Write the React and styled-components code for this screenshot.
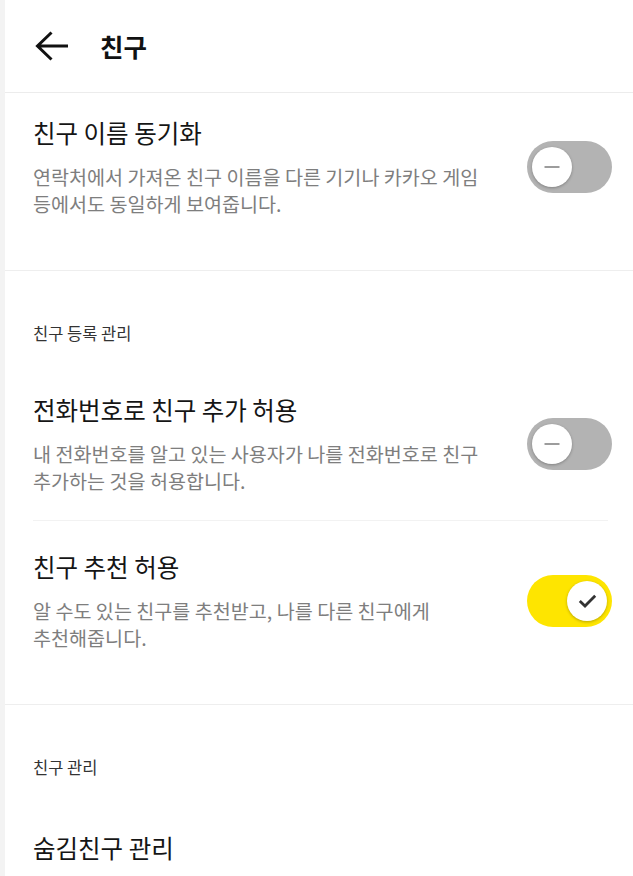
import React, { useState } from "react";
import styled, { createGlobalStyle } from "styled-components";

const GlobalStyle = createGlobalStyle`
  html, body {
    margin: 0;
    padding: 0;
    background: #f3f3f3;
  }
  body {
    font-family: "Noto Sans CJK KR", "Noto Sans", sans-serif;
    -webkit-font-smoothing: antialiased;
  }
`;

const Screen = styled.div`
  margin-left: 5px;
  min-height: 876px;
  background: #fff;
  overflow: hidden;
`;

const Header = styled.header`
  height: 92px;
  display: flex;
  align-items: center;
  gap: 31px;
  padding-left: 30px;
  border-bottom: 1px solid #ececec;
`;

const BackButton = styled.button`
  display: flex;
  padding: 0;
  border: none;
  background: none;
  cursor: pointer;
`;

const HeaderTitle = styled.h1`
  margin: 0;
  font-size: 25.5px;
  font-weight: 700;
  line-height: 34px;
  color: #111;
`;

const Group = styled.section`
  padding-bottom: 27px;
  border-bottom: 1px solid #eeeeee;
`;

const SectionLabel = styled.div`
  padding: 51px 28px 20px;
  font-size: 16.5px;
  line-height: 22px;
  color: #333;
`;

const Row = styled.div`
  display: flex;
  align-items: center;
  padding: ${(p) => p.$top}px 0 26px;
  margin: 0 21px 0 28px;
`;

const RowDivider = styled.hr`
  margin: 0 25px 0 28px;
  border: none;
  border-top: 1px solid #f2f2f2;
`;

const TextCol = styled.div`
  flex: 1;
  min-width: 0;
`;

const Title = styled.div`
  font-size: 24.5px;
  line-height: 32px;
  color: #151515;
`;

const Desc = styled.div`
  margin-top: 14px;
  font-size: 19.6px;
  line-height: 27px;
  color: #7e7e7e;
  white-space: pre-line;
`;

const Track = styled.button`
  position: relative;
  flex-shrink: 0;
  width: 85px;
  height: 52px;
  padding: 0;
  border: none;
  border-radius: 26px;
  background: ${(p) => (p.$on ? "#fee500" : "#b3b3b3")};
  cursor: pointer;
`;

const Knob = styled.span`
  position: absolute;
  top: 6px;
  left: ${(p) => (p.$on ? 40 : 5)}px;
  width: 40px;
  height: 40px;
  border-radius: 50%;
  background: #fff;
  box-shadow: 0 1px 3px rgba(0, 0, 0, 0.28);
  display: flex;
  align-items: center;
  justify-content: center;
`;

const Toggle = ({ on, onChange }) => (
  <Track $on={on} onClick={onChange}>
    <Knob $on={on}>
      {on ? (
        <svg width="19" height="14" viewBox="0 0 19 14">
          <path
            d="M1.8 7 L7 12 L17.2 1.8"
            fill="none"
            stroke="#333"
            strokeWidth="2.8"
          />
        </svg>
      ) : (
        <svg width="16" height="4" viewBox="0 0 16 4">
          <path d="M0.5 2 H15.5" stroke="#9c9c9c" strokeWidth="2" />
        </svg>
      )}
    </Knob>
  </Track>
);

const SettingRow = ({ title, desc, top = 30, value, onToggle }) => (
  <Row $top={top}>
    <TextCol>
      <Title>{title}</Title>
      {desc && <Desc>{desc}</Desc>}
    </TextCol>
    {onToggle && <Toggle on={value} onChange={onToggle} />}
  </Row>
);

const App = () => {
  const [sync, setSync] = useState(false);
  const [byPhone, setByPhone] = useState(false);
  const [recommend, setRecommend] = useState(true);

  return (
    <>
      <GlobalStyle />
      <Screen>
        <Header>
          <BackButton aria-label="뒤로">
            <svg width="34" height="30" viewBox="0 0 34 30">
              <path
                d="M16.5 1.5 L2.5 15 L16.5 28.5 M2.5 15 H33"
                fill="none"
                stroke="#111"
                strokeWidth="3"
              />
            </svg>
          </BackButton>
          <HeaderTitle>친구</HeaderTitle>
        </Header>

        <Group>
          <SettingRow
            top={24}
            title="친구 이름 동기화"
            desc={"연락처에서 가져온 친구 이름을 다른 기기나 카카오 게임\n등에서도 동일하게 보여줍니다."}
            value={sync}
            onToggle={() => setSync(!sync)}
          />
        </Group>

        <Group>
          <SectionLabel>친구 등록 관리</SectionLabel>
          <SettingRow
            title="전화번호로 친구 추가 허용"
            desc={"내 전화번호를 알고 있는 사용자가 나를 전화번호로 친구\n추가하는 것을 허용합니다."}
            value={byPhone}
            onToggle={() => setByPhone(!byPhone)}
          />
          <RowDivider />
          <SettingRow
            title="친구 추천 허용"
            desc={"알 수도 있는 친구를 추천받고, 나를 다른 친구에게\n추천해줍니다."}
            value={recommend}
            onToggle={() => setRecommend(!recommend)}
          />
        </Group>

        <Group>
          <SectionLabel>친구 관리</SectionLabel>
          <SettingRow top={34} title="숨김친구 관리" />
        </Group>
      </Screen>
    </>
  );
};

export default App;
